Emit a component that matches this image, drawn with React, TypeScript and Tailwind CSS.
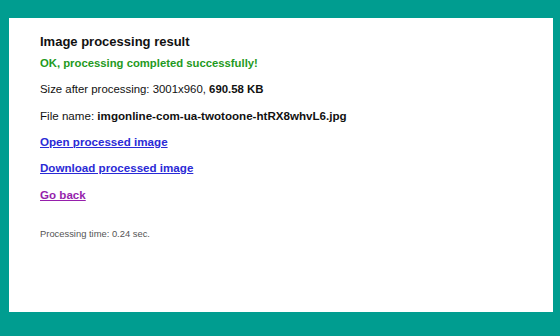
import React from 'react';

const lines = 'block leading-[20px]';

export default function App() {
  return (
    <div className="w-[560px] h-[336px] bg-[#009d90] pt-[18px] pl-[9px] pr-[7px] font-['Liberation_Sans',Arial,sans-serif]">
      <div className="h-[294px] bg-white pl-[31px] pt-[14px] text-[#111]">
        <h1 className={`${lines} text-[13px] font-bold`}>Image processing result</h1>
        <p className={`${lines} mt-[1px] text-[11.3px] font-bold text-[#1f9a22]`}>
          OK, processing completed successfully!
        </p>
        <p className={`${lines} mt-[6px] text-[11.4px]`}>
          Size after processing: 3001x960, <b>690.58 KB</b>
        </p>
        <p className={`${lines} mt-[7px] text-[11.6px]`}>
          File name: <b>imgonline-com-ua-twotoone-htRX8whvL6.jpg</b>
        </p>
        <a href="#" className={`${lines} mt-[6px] w-fit text-[11.6px] font-bold text-[#2a2ad6] underline`}>
          Open processed image
        </a>
        <a href="#" className={`${lines} mt-[6px] w-fit text-[11.6px] font-bold text-[#2a2ad6] underline`}>
          Download processed image
        </a>
        <a href="#" className={`${lines} mt-[7px] w-fit text-[11.6px] font-bold text-[#961fac] underline`}>
          Go back
        </a>
        <p className={`${lines} mt-[19px] text-[9.4px] text-[#555]`}>Processing time: 0.24 sec.</p>
      </div>
    </div>
  );
}
